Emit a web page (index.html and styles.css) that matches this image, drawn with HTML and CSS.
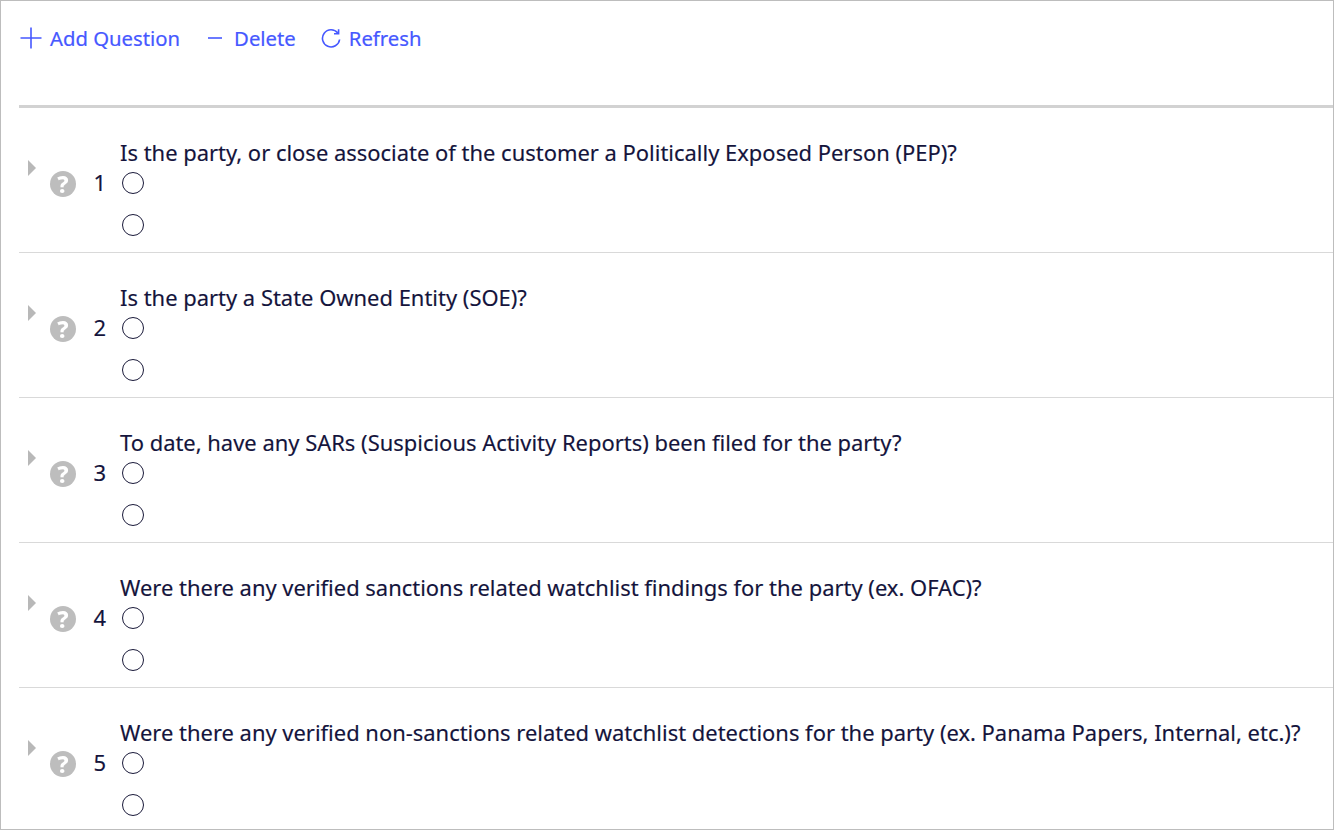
FILE: index.html
```html
<!DOCTYPE html>
<html lang="en">
<head>
<meta charset="utf-8">
<title>Questions</title>
<link rel="stylesheet" href="styles.css">
</head>
<body>
<main class="frame">
  <div class="toolbar">
    <button class="tool tool-add"><svg class="ico" width="24" height="24" viewBox="0 0 24 24"><path d="M12 1.5v21M1.5 12h21"/></svg>Add Question</button>
    <button class="tool tool-del"><svg class="ico" width="16" height="24" viewBox="0 0 16 24"><path d="M1 12h14"/></svg>Delete</button>
    <button class="tool tool-ref"><svg class="ico" width="20" height="20" viewBox="0 0 20 20"><path d="M16.8 5A8.6 8.6 0 1 0 18.6 11.5M17.6 1.2v4.6H13"/></svg>Refresh</button>
  </div>
  <section class="list">
    <article class="row">
      <span class="caret"></span>
      <span class="help">?</span>
      <span class="num">1</span>
      <div class="body">
        <p class="q">Is the party, or close associate of the customer a Politically Exposed Person (PEP)?</p>
        <span class="radio"></span><span class="radio"></span>
      </div>
    </article>
    <article class="row">
      <span class="caret"></span>
      <span class="help">?</span>
      <span class="num">2</span>
      <div class="body">
        <p class="q">Is the party a State Owned Entity (SOE)?</p>
        <span class="radio"></span><span class="radio"></span>
      </div>
    </article>
    <article class="row">
      <span class="caret"></span>
      <span class="help">?</span>
      <span class="num">3</span>
      <div class="body">
        <p class="q">To date, have any SARs (Suspicious Activity Reports) been filed for the party?</p>
        <span class="radio"></span><span class="radio"></span>
      </div>
    </article>
    <article class="row">
      <span class="caret"></span>
      <span class="help">?</span>
      <span class="num">4</span>
      <div class="body">
        <p class="q">Were there any verified sanctions related watchlist findings for the party (ex. OFAC)?</p>
        <span class="radio"></span><span class="radio"></span>
      </div>
    </article>
    <article class="row">
      <span class="caret"></span>
      <span class="help">?</span>
      <span class="num">5</span>
      <div class="body">
        <p class="q">Were there any verified non-sanctions related watchlist detections for the party (ex. Panama Papers, Internal, etc.)?</p>
        <span class="radio"></span><span class="radio"></span>
      </div>
    </article>
  </section>
</main>
</body>
</html>
```
FILE: styles.css
```css
* { box-sizing: border-box; }
html, body { margin: 0; height: 100%; background: #fff; }
body { font-family: "Noto Sans", "Open Sans", sans-serif; color: #14143c; overflow: hidden; }
.frame {
  width: 1334px; height: 830px; border: 1px solid #bdbdbd; overflow: hidden;
  padding-left: 18px; background: #fff;
}
.toolbar {
  height: 107px; border-bottom: 3px solid #d2d2d2;
  display: flex; align-items: flex-start; padding-top: 24px;
}
.tool {
  display: flex; align-items: center; height: 26px; padding: 0; border: 0; background: none;
  font: inherit; font-size: 20.3px; color: #4658ff; -webkit-text-stroke: 0.2px #4658ff;
}
.ico { fill: none; stroke: #4658ff; stroke-width: 1.6; flex: none; }
.tool-add .ico { margin-right: 7px; }
.tool-del { margin-left: 27px; }
.tool-del .ico { margin-right: 11px; }
.tool-ref { margin-left: 25px; }
.tool-ref .ico { margin-right: 8px; }
.list { display: flex; flex-direction: column; }
.row {
  height: 145px; border-bottom: 1px solid #d9d9d9;
  display: flex; align-items: flex-start;
}
.caret {
  width: 0; height: 0; margin: 52px 0 0 9px; flex: none;
  border-left: 8px solid #b8b8b8; border-top: 8px solid transparent; border-bottom: 8px solid transparent;
}
.help {
  width: 26px; height: 26px; margin: 63px 0 0 14px; border-radius: 50%; flex: none;
  background: #bdbdbd; color: #fff; font-size: 23px; font-weight: 800; line-height: 26px; text-align: center;
  filter: blur(0.6px);
}
.num { width: 30px; margin-top: 61px; flex: none; text-align: right; font-size: 22px; line-height: 27px; -webkit-text-stroke: 0.15px #14143c; }
.body { margin-left: 14px; padding-top: 31px; display: flex; flex-direction: column; align-items: flex-start; }
.q { margin: 0; font-size: 21.94px; line-height: 27px; white-space: nowrap; -webkit-text-stroke: 0.15px #14143c; }
.radio {
  width: 22px; height: 22px; border: 1.5px solid #1a1a3a; border-radius: 50%; background: #fff;
  margin-left: 2px; margin-top: 6px; margin-bottom: 14px;
}
```
